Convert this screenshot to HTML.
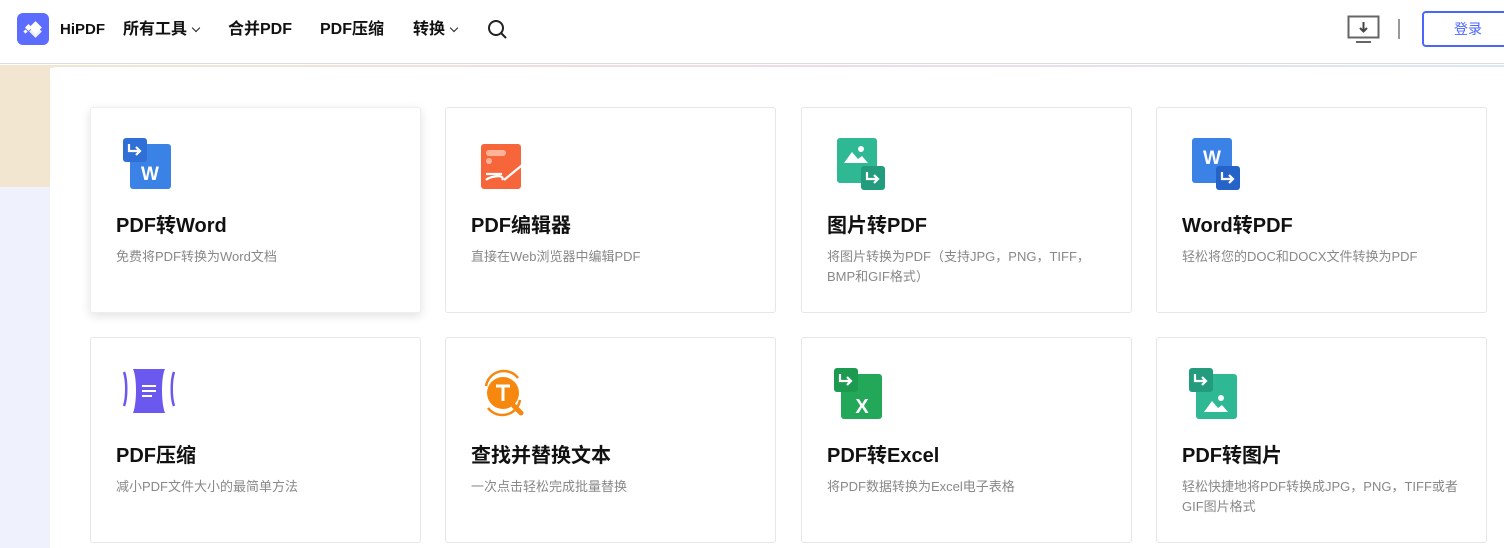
<!DOCTYPE html>
<html><head><meta charset="utf-8"><style>
*{margin:0;padding:0;box-sizing:border-box}
body{width:1504px;height:548px;overflow:hidden;background:#fff;font-family:"Liberation Sans","Noto Sans CJK SC",sans-serif;position:relative}
.hdr{position:absolute;left:0;top:0;width:1504px;height:64px;background:#fff;border-bottom:1px solid #ddd}
.logo{position:absolute;left:17px;top:13px;width:32px;height:32px;border-radius:6px;background:#5b6cff}
.nav{position:absolute;top:20px;font-size:16px;font-weight:bold;color:#111;line-height:20px}
.chev{display:inline-block;width:6px;height:6px;border-right:1.8px solid #222;border-bottom:1.8px solid #222;transform:rotate(45deg);margin-left:6px;position:relative;top:-3px}
.left1{position:absolute;left:0;top:65px;width:50px;height:122px;background:#f3e6d0}
.left2{position:absolute;left:0;top:187px;width:50px;height:361px;background:#eff1fd}
.topline{position:absolute;left:50px;top:65px;width:1454px;height:3px;background:linear-gradient(90deg,#f3e6d0,#f3d9e6,#d9e8f8)}
.panel{position:absolute;left:50px;top:67px;width:1454px;height:481px;background:#fff;border-top-left-radius:6px}
.card{position:absolute;width:331px;height:206px;border:1px solid #e6e6e6;border-radius:3px;background:#fff}
.card.sh{box-shadow:0 3px 10px rgba(0,0,0,.12);border-color:#eee}
.card svg{position:absolute;left:30px;top:28px}
.t{position:absolute;left:25px;top:101px;font-size:20px;font-weight:bold;color:#111;white-space:nowrap}
.d{position:absolute;left:25px;top:139px;width:290px;font-size:13px;color:#888;line-height:20px}
</style></head><body>
<div class="hdr">
<div class="logo"><svg width="32" height="32"><g fill="#fff"><rect x="14" y="10" width="9" height="9" transform="rotate(45 18.5 14.5)"/><rect x="14" y="14" width="9" height="9" transform="rotate(45 18.5 18.5)" opacity=".9"/><rect x="9" y="12" width="5" height="5" transform="rotate(45 11.5 14.5)"/><rect x="7" y="17" width="3" height="3" transform="rotate(45 8.5 18.5)"/></g></svg></div>
<div class="nav" style="left:60px;font-size:15px">HiPDF</div>
<div class="nav" style="left:123px">所有工具<span class="chev"></span></div>
<div class="nav" style="left:228px">合并PDF</div>
<div class="nav" style="left:320px">PDF压缩</div>
<div class="nav" style="left:413px">转换<span class="chev"></span></div>
<svg style="position:absolute;left:487px;top:19px" width="22" height="22"><circle cx="9" cy="9" r="7" fill="none" stroke="#222" stroke-width="2"/><line x1="14" y1="14" x2="19" y2="19" stroke="#222" stroke-width="2"/></svg>
<svg style="position:absolute;left:1347px;top:15px" width="34" height="30"><rect x="1.5" y="1.5" width="30" height="21" fill="none" stroke="#666" stroke-width="2"/><line x1="16.5" y1="7" x2="16.5" y2="16" stroke="#444" stroke-width="2"/><path d="M13 13l3.5 3.5 3.5-3.5" fill="none" stroke="#444" stroke-width="2"/><line x1="9" y1="27" x2="24" y2="27" stroke="#666" stroke-width="2"/></svg>
<div style="position:absolute;left:1398px;top:19px;width:2px;height:20px;background:#999"></div>
<div style="position:absolute;left:1422px;top:11px;width:90px;height:36px;border:2px solid #4a66ff;border-radius:4px;color:#4a66ff;font-size:14px;line-height:32px;padding-left:30px">登录</div>
</div>
<div class="left1"></div><div class="left2"></div>
<div class="topline"></div>
<div class="panel"></div>

<div class="card sh" style="left:90px;top:107px"><svg width="56" height="56"><rect x="9" y="8" width="41" height="45" rx="3" fill="#3b82e6"/><text x="29" y="44" font-family="Liberation Sans" font-weight="bold" font-size="19" fill="#fff" text-anchor="middle">W</text><rect x="2" y="2" width="24" height="24" rx="3" fill="#2f6fd6"/><path d="M8 8v7h11M15 11l4 4-4 4" fill="none" stroke="#fff" stroke-width="2.2"/></svg><div class="t">PDF转Word</div><div class="d">免费将PDF转换为Word文档</div></div>
<div class="card" style="left:445px;top:107px"><svg width="60" height="56"><rect x="5" y="8" width="40" height="45" rx="3" fill="#f7663a"/><rect x="10" y="14" width="20" height="6" rx="3" fill="#ffb49a"/><rect x="10" y="22" width="6" height="6" rx="3" fill="#ffb49a"/><path d="M10 38h16M10 44c4-4 20-6 16 0M28 44l22-18" fill="none" stroke="#fff" stroke-width="2.2"/></svg><div class="t">PDF编辑器</div><div class="d">直接在Web浏览器中编辑PDF</div></div>
<div class="card" style="left:801px;top:107px"><svg width="56" height="56"><rect x="5" y="2" width="40" height="45" rx="3" fill="#2eb894"/><path d="M12 27l8-11 6 7 4-3 6 7z" fill="#fff"/><circle cx="29" cy="13" r="3" fill="#fff"/><rect x="29" y="30" width="24" height="24" rx="3" fill="#229c7d"/><path d="M35 36v7h11M42 39l4 4-4 4" fill="none" stroke="#fff" stroke-width="2.2"/></svg><div class="t">图片转PDF</div><div class="d">将图片转换为PDF（支持JPG，PNG，TIFF，BMP和GIF格式）</div></div>
<div class="card" style="left:1156px;top:107px"><svg width="56" height="56"><rect x="5" y="2" width="40" height="45" rx="3" fill="#3b82e6"/><text x="25" y="28" font-family="Liberation Sans" font-weight="bold" font-size="19" fill="#fff" text-anchor="middle">W</text><rect x="29" y="30" width="24" height="24" rx="3" fill="#2563c9"/><path d="M35 36v7h11M42 39l4 4-4 4" fill="none" stroke="#fff" stroke-width="2.2"/></svg><div class="t">Word转PDF</div><div class="d">轻松将您的DOC和DOCX文件转换为PDF</div></div>

<div class="card" style="left:90px;top:337px"><svg width="62" height="56"><path d="M12 3h32c-4 8-4 34 0 44H12c4-10 4-36 0-44z" fill="#6b58ee"/><path d="M21 20h14M21 25h14M21 30h10" stroke="#fff" stroke-width="2"/><path d="M3 6c3 8 3 26 0 34M53 6c-3 8-3 26 0 34" fill="none" stroke="#6b58ee" stroke-width="2.5"/></svg><div class="t">PDF压缩</div><div class="d">减小PDF文件大小的最简单方法</div></div>
<div class="card" style="left:445px;top:337px"><svg width="62" height="60"><circle cx="27" cy="27" r="16" fill="#f7880f"/><path d="M20 20h14M27 20v15" stroke="#fff" stroke-width="3"/><path d="M10 20a18 18 0 0 1 32-8M44 34a18 18 0 0 1-32 8" fill="none" stroke="#f7880f" stroke-width="2.5"/><path d="M38 40l7 7" stroke="#f7880f" stroke-width="5" stroke-linecap="round"/></svg><div class="t">查找并替换文本</div><div class="d">一次点击轻松完成批量替换</div></div>
<div class="card" style="left:801px;top:337px"><svg width="56" height="56"><rect x="9" y="8" width="41" height="45" rx="3" fill="#23a85a"/><text x="30" y="47" font-family="Liberation Sans" font-weight="bold" font-size="20" fill="#fff" text-anchor="middle">X</text><rect x="2" y="2" width="24" height="24" rx="3" fill="#1c9a4f"/><path d="M8 8v7h11M15 11l4 4-4 4" fill="none" stroke="#fff" stroke-width="2.2"/></svg><div class="t">PDF转Excel</div><div class="d">将PDF数据转换为Excel电子表格</div></div>
<div class="card" style="left:1156px;top:337px"><svg width="56" height="56"><rect x="9" y="8" width="41" height="45" rx="3" fill="#2eb894"/><path d="M17 46l8-11 6 7 4-3 6 7z" fill="#fff"/><circle cx="34" cy="32" r="3" fill="#fff"/><rect x="2" y="2" width="24" height="24" rx="3" fill="#229c7d"/><path d="M8 8v7h11M15 11l4 4-4 4" fill="none" stroke="#fff" stroke-width="2.2"/></svg><div class="t">PDF转图片</div><div class="d">轻松快捷地将PDF转换成JPG，PNG，TIFF或者GIF图片格式</div></div>
</body></html>
